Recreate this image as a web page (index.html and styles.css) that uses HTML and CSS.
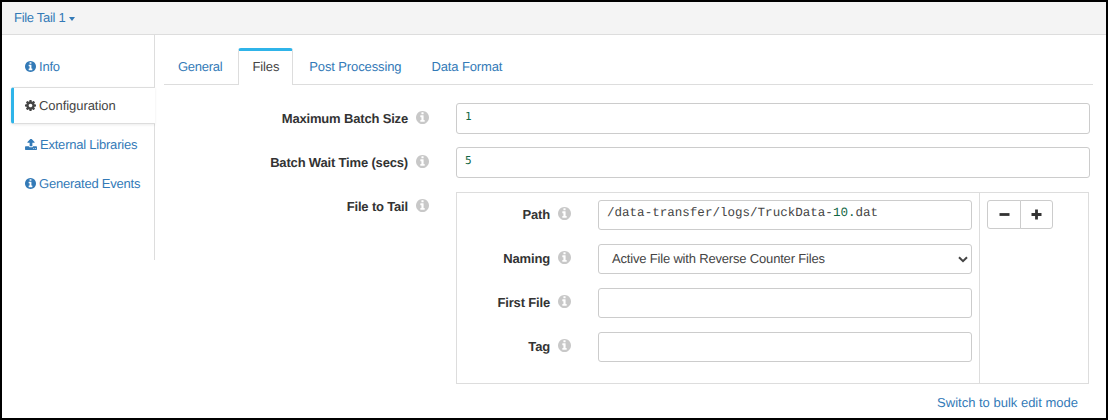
FILE: index.html
```html
<!DOCTYPE html>
<html lang="en">
<head>
<meta charset="utf-8">
<title>File Tail 1</title>
<link rel="stylesheet" href="styles.css">
</head>
<body>
<svg class="sprite" aria-hidden="true">
  <symbol id="info" viewBox="128 128 1536 1536"><path d="M1152 1376v-160q0-14-9-23t-23-9h-96v-512q0-14-9-23t-23-9h-320q-14 0-23 9t-9 23v160q0 14 9 23t23 9h96v320h-96q-14 0-23 9t-9 23v160q0 14 9 23t23 9h448q14 0 23-9t9-23zM1024 480v-160q0-14-9-23t-23-9h-192q-14 0-23 9t-9 23v160q0 14 9 23t23 9h192q14 0 23-9t9-23zM1664 896q0 209-103 385.500t-279.500 279.500-385.500 103-385.500-103-279.500-279.500-103-385.500 103-385.500 279.500-279.500 385.500-103 385.500 103 279.500 279.500 103 385.500z"/></symbol>
  <symbol id="cog" viewBox="128 128 1536 1536"><path d="M1152 896q0-106-75-181t-181-75-181 75-75 181 75 181 181 75 181-75 75-181zm512-109v222q0 12-8 23t-20 13l-185 28q-19 54-39 91 35 50 107 138 10 12 10 25t-9 23q-27 37-99 108t-94 71q-12 0-26-9l-138-108q-44 23-91 38-16 136-29 186-7 28-36 28h-222q-14 0-24.500-8.500t-11.500-21.500l-28-184q-49-16-90-37l-141 107q-10 9-25 9-14 0-25-11-126-114-165-168-7-10-7-23 0-12 8-23 15-21 51-66.500t54-70.500q-27-50-41-99l-183-27q-13-2-21-12.500t-8-23.500v-222q0-12 8-23t19-13l186-28q14-46 39-92-40-57-107-138-10-12-10-24 0-10 9-23 26-36 98.500-107.500t94.500-71.500q13 0 26 10l138 107q44-23 91-38 16-136 29-186 7-28 36-28h222q14 0 24.500 8.500t11.500 21.500l28 184q49 16 90 37l142-107q9-9 24-9 13 0 25 10 129 119 165 170 7 8 7 22 0 12-8 23-15 21-51 66.500t-54 70.500q26 50 41 98l183 28q13 2 21 12.500t8 23.500z"/></symbol>
  <symbol id="upload" viewBox="64 128 1664 1536"><path d="M1344 1472q0-26-19-45t-45-19-45 19-19 45 19 45 45 19 45-19 19-45zm256 0q0-26-19-45t-45-19-45 19-19 45 19 45 45 19 45-19 19-45zm128-224v320q0 40-28 68t-68 28h-1472q-40 0-68-28t-28-68v-320q0-40 28-68t68-28h427q21 56 70.500 92t110.500 36h256q61 0 110.500-36t70.500-92h427q40 0 68 28t28 68zm-325-648q-17 40-59 40h-256v448q0 26-19 45t-45 19h-256q-26 0-45-19t-19-45v-448h-256q-42 0-59-40-17-39 14-69l448-448q18-19 45-19t45 19l448 448q31 30 14 69z"/></symbol>
</svg>
<div class="panel">
  <header class="panel-header"><a class="stage-menu">File Tail 1<span class="caret"></span></a></header>
  <div class="panel-body">
    <nav class="side-nav">
      <a class="side-link"><svg class="side-icon"><use href="#info"/></svg>Info</a>
      <a class="side-link active"><svg class="side-icon"><use href="#cog"/></svg>Configuration</a>
      <a class="side-link"><svg class="side-icon wide"><use href="#upload"/></svg>External Libraries</a>
      <a class="side-link"><svg class="side-icon"><use href="#info"/></svg>Generated Events</a>
    </nav>
    <main class="content">
      <div class="tabs">
        <a class="tab">General</a>
        <a class="tab active">Files</a>
        <a class="tab">Post Processing</a>
        <a class="tab">Data Format</a>
      </div>
      <div class="form">
        <div class="row">
          <div class="label">Maximum Batch Size<svg class="hint"><use href="#info"/></svg></div>
          <div class="field code number">1</div>
        </div>
        <div class="row">
          <div class="label">Batch Wait Time (secs)<svg class="hint"><use href="#info"/></svg></div>
          <div class="field code number">5</div>
        </div>
        <div class="row">
          <div class="label">File to Tail<svg class="hint"><use href="#info"/></svg></div>
          <div class="group">
            <div class="group-fields">
              <div class="row">
                <div class="label">Path<svg class="hint"><use href="#info"/></svg></div>
                <div class="field code path">/data-transfer/logs/TruckData-<span class="num">10.</span>dat</div>
              </div>
              <div class="row">
                <div class="label">Naming<svg class="hint"><use href="#info"/></svg></div>
                <div class="field select">Active File with Reverse Counter Files<svg class="chevron" viewBox="0 0 10 7"><path d="M1 1.2 5 5.2 9 1.2"/></svg></div>
              </div>
              <div class="row">
                <div class="label">First File<svg class="hint"><use href="#info"/></svg></div>
                <div class="field"></div>
              </div>
              <div class="row">
                <div class="label">Tag<svg class="hint"><use href="#info"/></svg></div>
                <div class="field"></div>
              </div>
            </div>
            <div class="group-actions">
              <div class="buttons">
                <button class="button" aria-label="Remove"><svg class="sign" viewBox="0 0 11 11"><path d="M.5 5.5h10"/></svg></button>
                <button class="button" aria-label="Add"><svg class="sign" viewBox="0 0 11 11"><path d="M.5 5.5h10M5.500 .5v10"/></svg></button>
              </div>
            </div>
          </div>
        </div>
        <a class="bulk-link">Switch to bulk edit mode</a>
      </div>
    </main>
  </div>
</div>
</body>
</html>
```
FILE: styles.css
```css
* { box-sizing: border-box; }
body {
  margin: 0;
  color: #333;
  font: 13px/18px "Liberation Sans", Arial, sans-serif;
  text-rendering: geometricPrecision;
}
a { color: #337ab7; text-decoration: none; }
svg { fill: currentColor; flex: none; }
.sprite { display: none; }
.panel {
  width: 1108px;
  height: 420px;
  border: 2px solid #000;
  background: #fff;
  display: flex;
  flex-direction: column;
}
.panel-header {
  height: 33px;
  padding: 7px 12px 0;
  background: #f4f4f4;
  border-bottom: 1px solid #ddd;
}
.stage-menu { display: flex; align-items: center; letter-spacing: -0.3px; }
.caret {
  margin: 2px 0 0 4px;
  border: 3.5px solid transparent;
  border-top: 4px solid currentColor;
  border-bottom: 0;
}
.panel-body { display: flex; flex: 1; }
.side-nav {
  width: 144px;
  height: 225px;
  margin-left: 9px;
  padding-top: 13px;
  background: linear-gradient(#ddd, #ddd) right / 1px 100% no-repeat;
  letter-spacing: -0.22px;
}
.side-link {
  display: flex;
  align-items: center;
  height: 39px;
  padding: 0 0 2px 14px;
  white-space: nowrap;
}
.side-link.active {
  height: 37px;
  margin-bottom: 2px;
  padding: 0 0 0 11px;
  letter-spacing: -0.06px;
  border: solid #ddd;
  border-width: 1px 0 1px 3px;
  border-left-color: #2fb4e9;
  border-radius: 3px 0 0 3px;
  box-shadow: 0 1px 3px rgba(0, 0, 0, .08);
  background: #fff;
  color: #444;
}
.side-icon { width: 11px; height: 11px; margin-right: 3px; }
.side-icon.wide { width: 12px; height: 11px; }
.content { flex: 1; padding: 13px 13px 0 9px; }
.tabs {
  display: flex;
  height: 37px;
  border-bottom: 1px solid #ddd;
  letter-spacing: -0.12px;
}
.tab {
  height: 36px;
  padding: 10px 14px 0;
  margin-right: 2px;
}
.tab:first-child { letter-spacing: -0.26px; }
.tab.active {
  height: 37px;
  padding: 7px 13px 0;
  border: 1px solid #ddd;
  border-top: 3px solid #2fb4e9;
  border-bottom: 0;
  border-radius: 3px 3px 0 0;
  background: #fff;
  color: #444;
}
.form { padding: 18px 3px 0 0; }
.row { display: flex; margin-bottom: 13px; }
.label {
  width: 292px;
  padding: 7px 27px 0 0;
  display: flex;
  justify-content: flex-end;
  font-weight: bold;
  letter-spacing: -0.17px;
}
.hint { width: 13px; height: 13px; margin: 1px 0 0 8px; color: #c8c8c8; }
.field {
  flex: 1;
  height: 31px;
  padding: 5px 8px 0;
  border: 1px solid #ccc;
  border-radius: 3px;
}
.code { font-family: "DejaVu Sans Mono", monospace; font-size: 11px; line-height: 16px; }
.number, .num { color: #164; }
.path { font-family: "Liberation Mono", monospace; font-size: 12.550px; padding-top: 4px; color: #444; }
.group {
  flex: 1;
  height: 192px;
  margin: 1px 1px 0 0;
  border: 1px solid #ddd;
  display: flex;
}
.row:has(> .group) { margin-bottom: 10px; }
.group-fields { width: 523px; padding: 7px 7px 0 0; border-right: 1px solid #ddd; }
.group-fields .label { width: 141px; padding-top: 6px; }
.group-fields .row { margin-bottom: 14px; }
.group-fields .field { height: 30px; }
.select {
  display: flex;
  align-items: center;
  justify-content: space-between;
  color: #444;
  letter-spacing: -0.18px;
}
.group-fields .select { padding: 0 3px 1px 13px; }
.chevron { width: 10px; height: 7px; margin-top: 1px; fill: none; stroke: #444; stroke-width: 2; }
.group-actions { padding: 7px; }
.buttons { display: flex; }
.button {
  width: 34px;
  height: 29px;
  padding: 0;
  border: 1px solid #ccc;
  background: #fff;
  color: #333;
  display: flex;
  align-items: center;
  justify-content: center;
}
.button:first-child { border-radius: 3px 0 0 3px; }
.button:last-child { width: 33px; margin-left: -1px; border-radius: 0 3px 3px 0; }
.sign { width: 11px; height: 11px; stroke: currentColor; stroke-width: 2.800; fill: none; }
.bulk-link { display: block; padding-right: 12px; text-align: right; }
```
